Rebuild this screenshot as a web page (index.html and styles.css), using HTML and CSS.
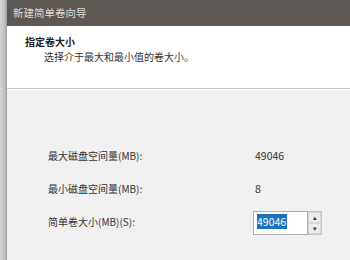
FILE: index.html
```html
<!DOCTYPE html>
<html lang="zh-CN">
<head>
  <meta charset="UTF-8">
  <title>新建简单卷向导</title>
  <link rel="stylesheet" href="styles.css">
</head>
<body>
  <div class="edge"></div>
  <div class="wizard">
    <div class="titlebar">新建简单卷向导</div>
    <div class="header">
      <div class="header-title">指定卷大小</div>
      <div class="header-sub">选择介于最大和最小值的卷大小。</div>
    </div>
    <div class="content">
      <div class="row">
        <span class="label">最大磁盘空间量(MB):</span>
        <span class="value">49046</span>
      </div>
      <div class="row">
        <span class="label">最小磁盘空间量(MB):</span>
        <span class="value">8</span>
      </div>
      <div class="row">
        <span class="label">简单卷大小(MB)(S):</span>
        <div class="spin">
          <div class="spin-input"><span class="sel">49046</span></div>
          <div class="spin-btns">
            <div class="spin-btn">&#9652;</div>
            <div class="spin-btn">&#9662;</div>
          </div>
        </div>
      </div>
    </div>
  </div>
</body>
</html>
```

FILE: styles.css
```css
* {
  font-family: 'Microsoft YaHei', 'Noto Sans CJK SC', 'Liberation Sans', sans-serif;
  box-sizing: border-box;
}

body {
  margin: 0;
  width: 350px;
  height: 260px;
  display: flex;
  overflow: hidden;
  background: #f0f0f0;
}

/* 窗口左侧边框 */
.edge {
  width: 7px;
  background: linear-gradient(to right, #d4d4d4, #bdbdbd 70%, #9a9a9a);
}

.wizard {
  flex: 1;
  display: flex;
  flex-direction: column;
}

.titlebar {
  height: 26px;
  line-height: 26px;
  padding-left: 6px;
  background: #5d5853;
  color: #dcdcdc;
  font-size: 10.5px;
}

.header {
  height: 63px;
  background: #fff;
  padding-top: 9px;
  border-bottom: 1px solid #c6c6c6;
  color: #222;
}

.header-title {
  padding-left: 18px;
  font-size: 10px;
  font-weight: bold;
  line-height: 14px;
}

.header-sub {
  padding-left: 37px;
  font-size: 10px;
  line-height: 16px;
  color: #333;
}

.content {
  flex: 1;
  border-top: 1px solid #fff;
  padding-top: 49px;
  padding-left: 41px;
}

.row {
  display: flex;
  align-items: center;
  height: 33px;
  font-size: 10px;
  color: #333;
}

.label {
  width: 207px;
}

.value {
  font-size: 10.5px;
  color: #333;
}

.spin {
  display: flex;
  height: 24px;
  margin-left: -2px;
  margin-top: 3px;
}

.spin-input {
  width: 55px;
  height: 24px;
  border: 1px solid #abadb3;
  background: #fff;
  padding: 2px 0 0 3px;
}

.sel {
  display: inline-block;
  background: #1f6fbf;
  color: #fff;
  font-size: 10.5px;
  line-height: 15px;
  padding-right: 1px;
}

.spin-btns {
  width: 14px;
  display: flex;
  flex-direction: column;
  border: 1px solid #c4c4c4;
  border-left: none;
  background: #fff;
}

.spin-btn {
  flex: 1;
  background: #ececec;
  border: 1px solid #d6d6d6;
  font-size: 7px;
  line-height: 9px;
  text-align: center;
  color: #333;
}
```
